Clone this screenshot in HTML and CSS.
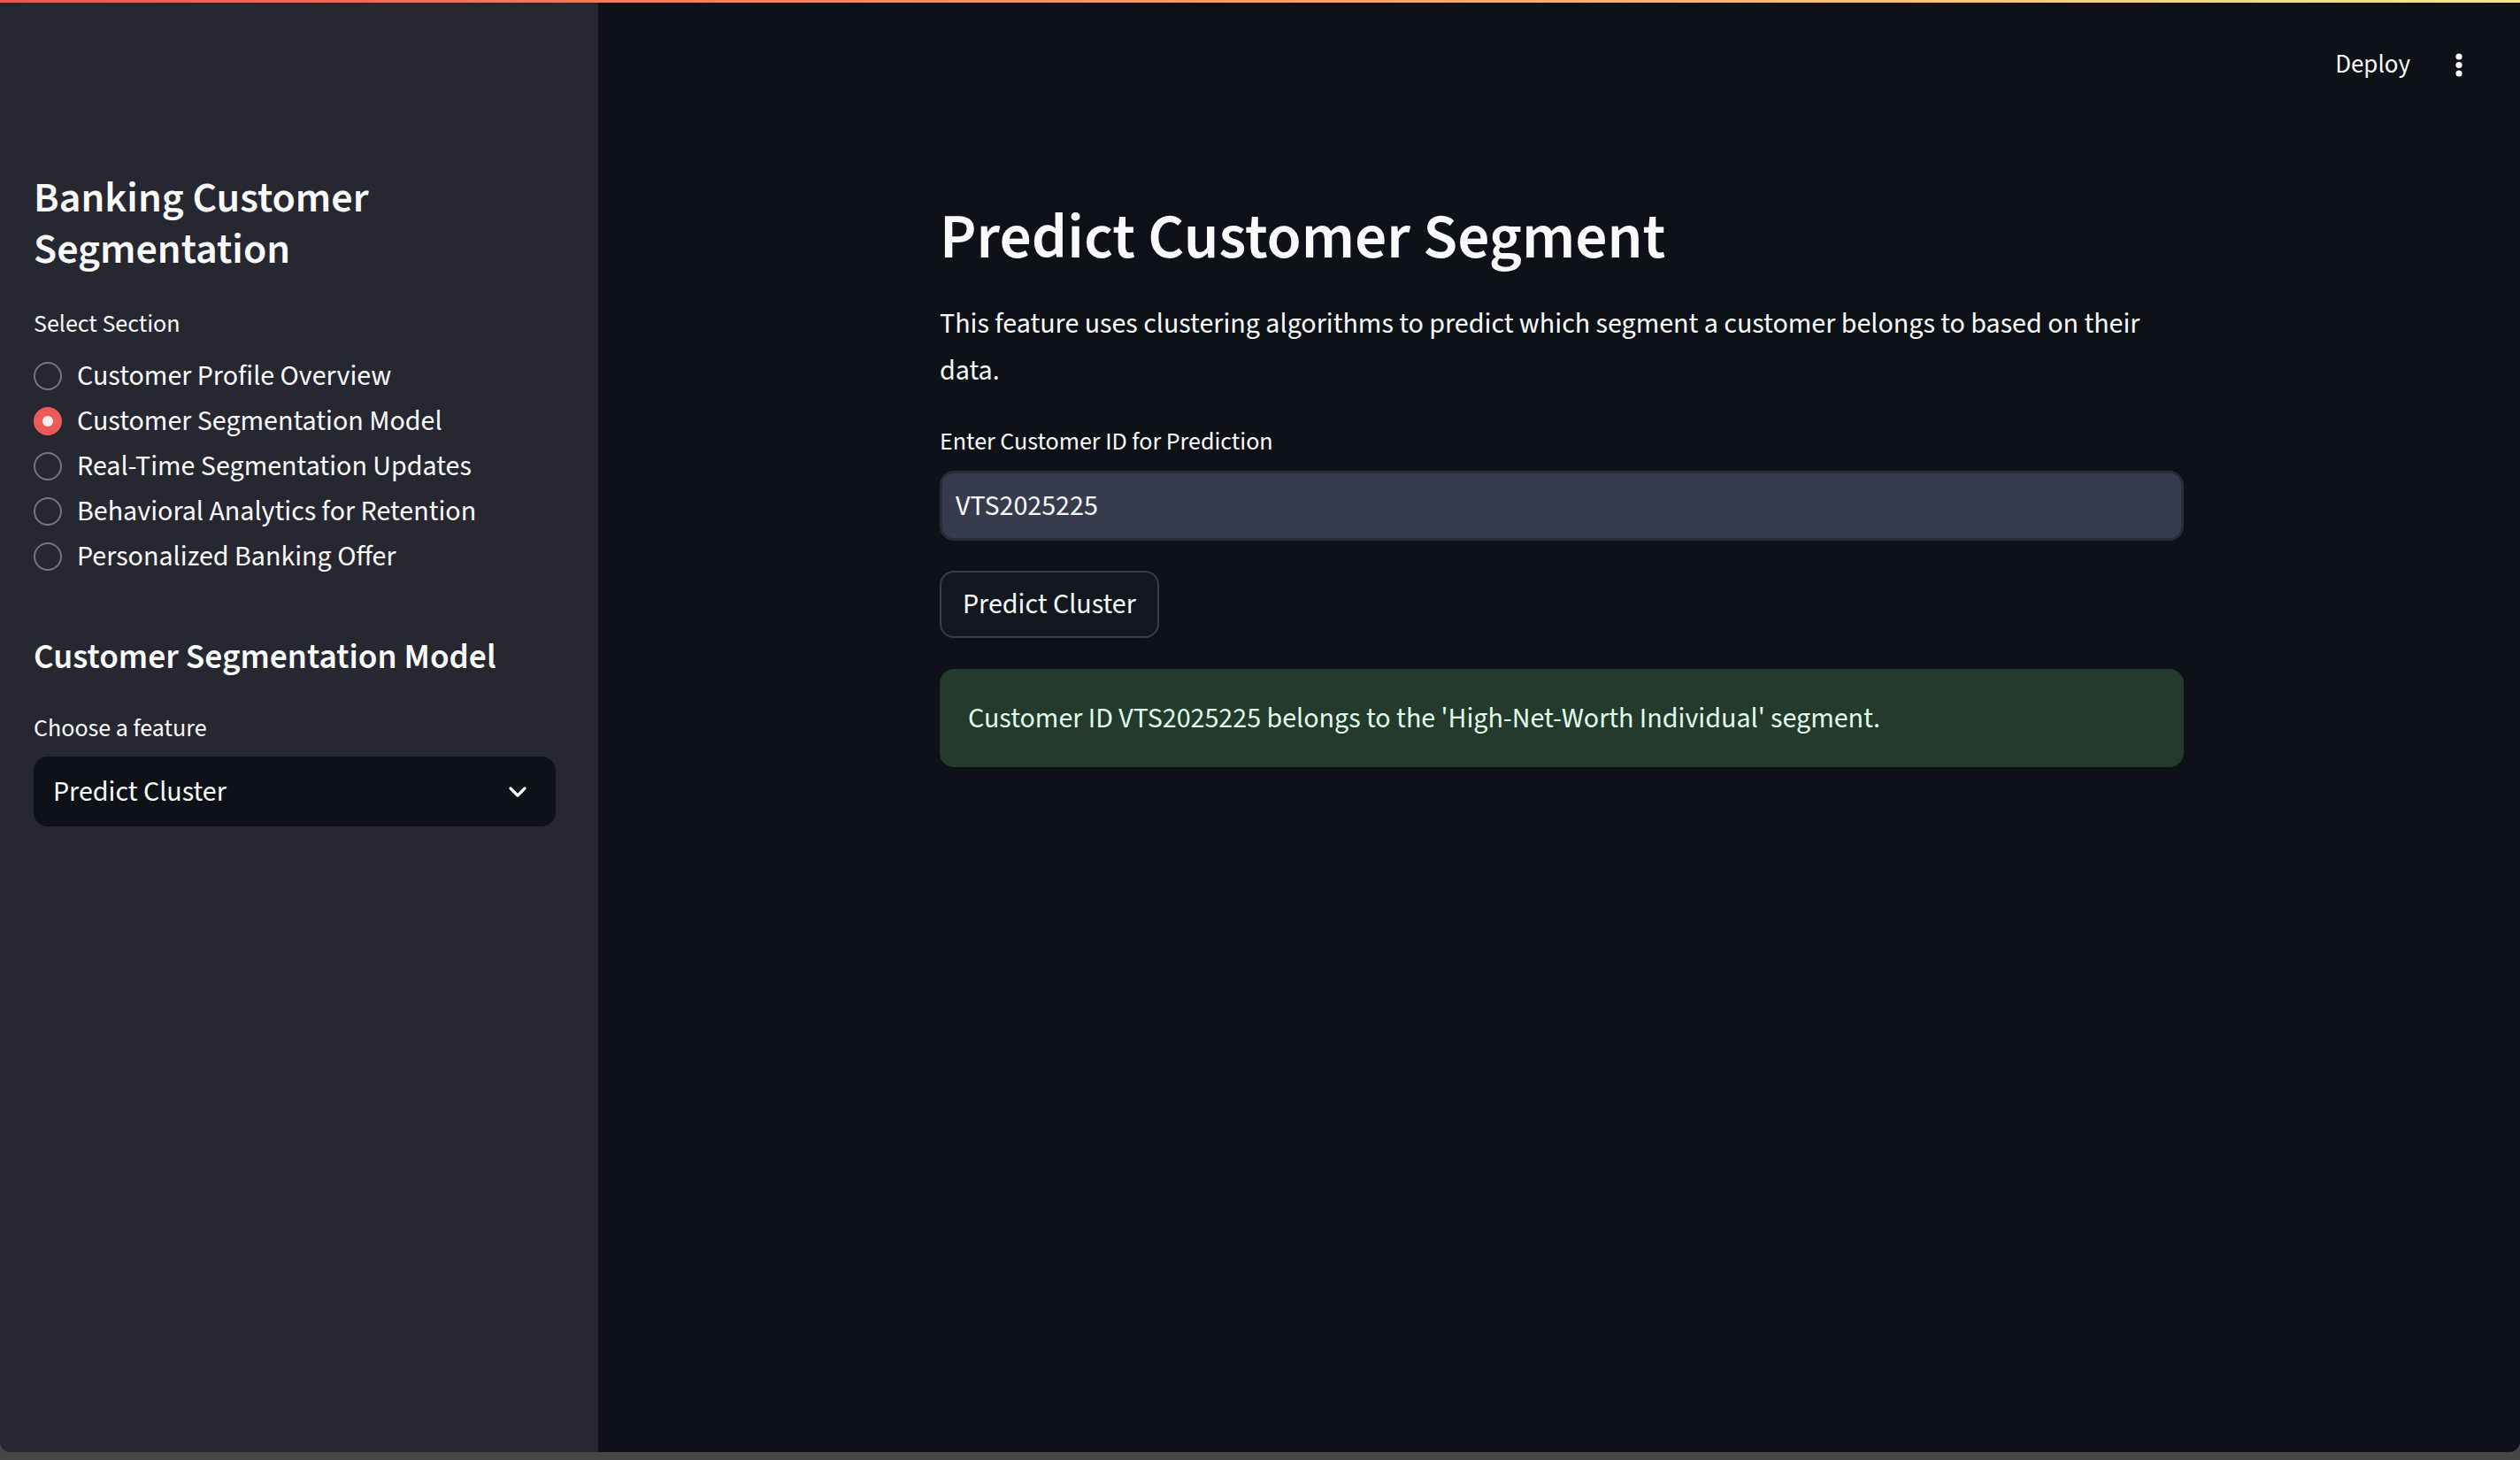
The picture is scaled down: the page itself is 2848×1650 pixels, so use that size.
FILE: index.html
```html
<!DOCTYPE html>
<html lang="en">
<head>
<meta charset="utf-8">
<title>Banking Customer Segmentation</title>
<link rel="stylesheet" href="styles.css">
</head>
<body>
<div class="app">
  <div class="decoration"></div>
  <div class="shell">
    <aside class="sidebar">
      <h1 class="side-title">Banking Customer Segmentation</h1>
      <div class="label side-label">Select Section</div>
      <div class="radios">
        <div class="radio"><span class="dot"></span><span>Customer Profile Overview</span></div>
        <div class="radio checked"><span class="dot"></span><span>Customer Segmentation Model</span></div>
        <div class="radio"><span class="dot"></span><span>Real-Time Segmentation Updates</span></div>
        <div class="radio"><span class="dot"></span><span>Behavioral Analytics for Retention</span></div>
        <div class="radio"><span class="dot"></span><span>Personalized Banking Offer</span></div>
      </div>
      <h2 class="side-header">Customer Segmentation Model</h2>
      <div class="label side-label2">Choose a feature</div>
      <div class="select">
        <span>Predict Cluster</span>
        <svg class="chev" width="22" height="14" viewBox="0 0 22 14"><path d="M3 3 L11 11 L19 3" fill="none" stroke="#fafafa" stroke-width="3.2" stroke-linecap="round" stroke-linejoin="round"/></svg>
      </div>
    </aside>
    <main class="main">
      <header class="topbar">
        <span class="deploy">Deploy</span>
        <svg class="kebab" width="8" height="27" viewBox="0 0 8 27"><circle cx="4" cy="4" r="3.6" fill="#fafafa"/><circle cx="4" cy="13.5" r="3.6" fill="#fafafa"/><circle cx="4" cy="23" r="3.6" fill="#fafafa"/></svg>
      </header>
      <section class="content">
        <h1 class="title">Predict Customer Segment</h1>
        <p class="desc">This feature uses clustering algorithms to predict which segment a customer belongs to based on their<br>data.</p>
        <div class="label main-label">Enter Customer ID for Prediction</div>
        <div class="input">VTS2025225</div>
        <button class="btn">Predict Cluster</button>
        <div class="success">Customer ID VTS2025225 belongs to the 'High-Net-Worth Individual' segment.</div>
      </section>
    </main>
  </div>
</div>
</body>
</html>
```
FILE: styles.css
```css
* { box-sizing: border-box; }
html, body { margin: 0; padding: 0; }
body {
  width: 2848px;
  height: 1650px;
  overflow: hidden;
  background: #464646;
  color: #fafafa;
  font-family: "Source Sans Pro", "Source Sans 3", Lato, "Liberation Sans", sans-serif;
}
.app {
  height: 1641px;
  display: flex;
  flex-direction: column;
  background: #0e1117;
  border-radius: 0 0 12px 12px;
  overflow: hidden;
}
.decoration {
  flex: none;
  height: 3px;
  background: linear-gradient(90deg, #ee5659, #f6e88a);
}
.shell { flex: 1; display: flex; }

/* Sidebar */
.sidebar {
  flex: none;
  width: 676px;
  background: #262730;
  padding: 192px 48px 0 38px;
}
.side-title {
  margin: 0;
  font-size: 48px;
  line-height: 58px;
  font-weight: 600;
}
.label {
  font-size: 28px;
  line-height: 40px;
  color: #fafafa;
}
.side-label { margin-top: 35px; }
.radios { margin-top: 13px; }
.radio {
  height: 51px;
  display: flex;
  align-items: center;
  gap: 17px;
  font-size: 32px;
}
.dot {
  flex: none;
  width: 32px;
  height: 32px;
  border-radius: 50%;
  border: 2.5px solid #76777c;
  display: flex;
  align-items: center;
  justify-content: center;
}
.radio.checked .dot {
  border: none;
  background: #ec5a5a;
}
.radio.checked .dot::after {
  content: "";
  width: 12px;
  height: 12px;
  border-radius: 50%;
  background: #f0f0f4;
}
.side-header {
  margin: 65px 0 0 0;
  font-size: 39.5px;
  line-height: 48px;
  font-weight: 600;
}
.side-label2 { margin-top: 36px; }
.select {
  margin-top: 12px;
  height: 79px;
  background: #0e1117;
  border-radius: 16px;
  display: flex;
  align-items: center;
  justify-content: space-between;
  padding: 0 32px 0 22px;
  font-size: 32px;
}

/* Main */
.main { flex: 1; display: flex; flex-direction: column; }
.topbar {
  height: 140px;
  display: flex;
  align-items: center;
  justify-content: flex-end;
  padding-right: 65px;
}
.deploy { font-size: 29px; }
.kebab { margin-left: 51px; }
.content {
  margin-left: 386px;
  width: 1406px;
  padding-top: 83px;
}
.title {
  margin: 0;
  font-size: 71.5px;
  line-height: 86px;
  font-weight: 600;
}
.desc {
  margin: 28px 0 0 0;
  font-size: 32px;
  line-height: 53px;
}
.main-label { margin-top: 33px; }
.input {
  margin-top: 13px;
  height: 79px;
  background: #373b4e;
  border: 3px solid #2a2d38;
  border-radius: 16px;
  display: flex;
  align-items: center;
  padding-left: 15px;
  font-size: 32px;
}
.btn {
  display: block;
  margin-top: 34px;
  height: 76px;
  padding: 0 24px;
  background: #131720;
  border: 2px solid #3b3d45;
  border-radius: 16px;
  color: #fafafa;
  font-family: inherit;
  font-size: 32px;
}
.success {
  margin-top: 35px;
  height: 111px;
  background: #233a2d;
  border-radius: 16px;
  display: flex;
  align-items: center;
  padding: 0 32px;
  font-size: 32px;
  color: #dffde9;
}
```
